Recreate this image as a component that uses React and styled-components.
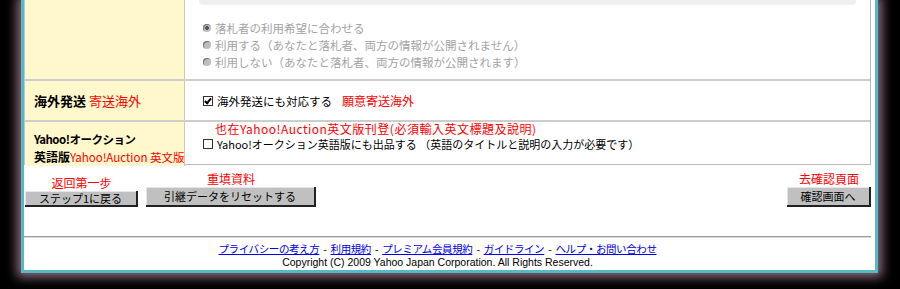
import React from 'react'
import styled, { createGlobalStyle } from 'styled-components'

const GlobalStyle = createGlobalStyle`
   html, body {
      margin: 0;
      padding: 0;
      background: #000;
   }
   body {
      font-family: "Noto Sans CJK JP", "Noto Sans", sans-serif;
      font-size: 12px;
      color: #000;
   }
`

const App = () => {
   const options = [
      { id: 1, label: '落札者の利用希望に合わせる', checked: true },
      { id: 2, label: '利用する（あなたと落札者、両方の情報が公開されません）', checked: false },
      { id: 3, label: '利用しない（あなたと落札者、両方の情報が公開されます）', checked: false },
   ]

   const links = ['プライバシーの考え方', '利用規約', 'プレミアム会員規約', 'ガイドライン', 'ヘルプ・お問い合わせ']

   return (
      <Stage>
         <GlobalStyle />
         <Frame>
            <Table>
               <Row $height={79}>
                  <Label />
                  <Value>
                     <GreyBox />
                     <Options>
                        {options.map((o) => (
                           <Option key={o.id}>
                              <Radio $checked={o.checked} />
                              {o.label}
                           </Option>
                        ))}
                     </Options>
                  </Value>
               </Row>
               <Row $height={39}>
                  <Label $center>
                     <b>海外発送</b>&nbsp;<Red>寄送海外</Red>
                  </Label>
                  <Value $center>
                     <CheckLine>
                        <Check $checked />
                        海外発送にも対応する
                        <Red $gap>願意寄送海外</Red>
                     </CheckLine>
                  </Value>
               </Row>
               <Row $height={42}>
                  <Label $top={9}>
                     <LabelLine $tight>Yahoo!オークション</LabelLine>
                     <LabelLine>
                        英語版<Red $thin>Yahoo!Auction 英文版</Red>
                     </LabelLine>
                  </Label>
                  <Value>
                     <Note>也在Yahoo!Auction英文版刊登(必須輸入英文標題及說明)</Note>
                     <CheckLine $small>
                        <Check />
                        Yahoo!オークション英語版にも出品する （英語のタイトルと説明の入力が必要です）
                     </CheckLine>
                  </Value>
               </Row>
            </Table>

            <ButtonBar>
               <ButtonGroup>
                  <Hint>返回第一步</Hint>
                  <Button $w={113} $h={16}>ステップ1に戻る</Button>
               </ButtonGroup>
               <ButtonGroup>
                  <Hint>重填資料</Hint>
                  <Button $w={170} $h={20}>引継データをリセットする</Button>
               </ButtonGroup>
               <ButtonGroup $right>
                  <Hint>去確認頁面</Hint>
                  <Button $w={84} $h={20}>確認画面へ</Button>
               </ButtonGroup>
            </ButtonBar>

            <Rule />

            <Footer>
               <Links>
                  {links.map((l, i) => (
                     <React.Fragment key={l}>
                        {i > 0 && <Sep>-</Sep>}
                        <Link href="#">{l}</Link>
                     </React.Fragment>
                  ))}
               </Links>
               <Copyright>Copyright (C) 2009 Yahoo Japan Corporation. All Rights Reserved.</Copyright>
            </Footer>
         </Frame>
      </Stage>
   )
}

export default App

const Stage = styled.div`
   width: 900px;
   height: 289px;
   box-sizing: border-box;
   padding: 0 22px 16px 21px;
   background: #000;
   overflow: hidden;
   display: flex;
`

const Frame = styled.div`
   flex: 1;
   display: flex;
   flex-direction: column;
   background: #fff;
   border: 3px solid #56b9c8;
   border-top: none;
   box-shadow: 0 0 10px 4px #8e6f82;
   padding-right: 4px;
`

const Table = styled.div`
   display: flex;
   flex-direction: column;
   border-left: 1px solid #c4c4c4;
   border-right: 1px solid #b8b8b8;
   border-bottom: 1px solid #bcbcbc;
`

const Row = styled.div`
   display: grid;
   grid-template-columns: 160px 1fr;
   height: ${(p) => p.$height}px;
   & + & {
      border-top: 2px solid #cdcdcd;
   }
`

const Label = styled.div`
   background: #fff8cc;
   border-right: 1px solid #c8c8c8;
   padding: ${(p) => p.$top || 0}px 0 0 9px;
   display: flex;
   flex-direction: column;
   ${(p) => p.$center && 'flex-direction: row; align-items: center;'}
   font-size: 13px;
   white-space: nowrap;
`

const LabelLine = styled.div`
   line-height: 17px;
   font-weight: bold;
   font-size: ${(p) => (p.$tight ? 11.5 : 12)}px;
   letter-spacing: ${(p) => (p.$tight ? -0.5 : 0)}px;
`

const Value = styled.div`
   display: flex;
   flex-direction: column;
   padding-left: 18px;
   min-width: 0;
   ${(p) => p.$center && 'justify-content: center;'}
`

const GreyBox = styled.div`
   height: 5px;
   margin: 0 14px 0 -4px;
   background: #efefef;
   border-radius: 0 0 4px 4px;
`

const Options = styled.div`
   margin-top: 14px;
   display: flex;
   flex-direction: column;
`

const Option = styled.div`
   display: flex;
   align-items: center;
   height: 17px;
   font-size: 11.5px;
   color: #a3a3a3;
   white-space: nowrap;
`

const Radio = styled.span`
   width: 8px;
   height: 8px;
   margin-right: 4px;
   border-radius: 50%;
   background: ${(p) => (p.$checked ? 'radial-gradient(circle, #555 0 1.6px, #bdbdbd 2.2px)' : '#bdbdbd')};
   box-shadow: inset 1px 1px 0 #777;
   flex-shrink: 0;
`

const CheckLine = styled.div`
   display: flex;
   align-items: center;
   height: 14px;
   font-size: ${(p) => (p.$small ? 11 : 11.5)}px;
   white-space: nowrap;
`

const Check = styled.span`
   width: 8px;
   height: 8px;
   margin-right: 4px;
   border: 1px solid #333;
   background: #fff;
   flex-shrink: 0;
   position: relative;
   &::after {
      content: '';
      display: ${(p) => (p.$checked ? 'block' : 'none')};
      position: absolute;
      left: 2px;
      top: 0;
      width: 2px;
      height: 5px;
      border: solid #000;
      border-width: 0 2px 2px 0;
      transform: rotate(40deg);
   }
`

const Red = styled.span`
   color: #ff0000;
   font-weight: normal;
   ${(p) => p.$gap && 'margin-left: 10px; font-size: 12px;'}
   ${(p) => p.$thin && 'font-size: 11.5px;'}
`

const Note = styled.div`
   color: #ff0000;
   font-size: 12px;
   line-height: 14px;
   letter-spacing: 0.5px;
   margin: 0 0 1px 12px;
   white-space: nowrap;
`

const ButtonBar = styled.div`
   display: flex;
   align-items: flex-end;
   gap: 8px;
   padding: 8px 0 0 1px;
`

const ButtonGroup = styled.div`
   display: flex;
   flex-direction: column;
   align-items: center;
   ${(p) => p.$right && 'margin-left: auto;'}
`

const Hint = styled.div`
   color: #ff0000;
   font-size: 12px;
   line-height: 12px;
   margin-bottom: 2px;
   white-space: nowrap;
`

const Button = styled.button`
   width: ${(p) => p.$w}px;
   height: ${(p) => p.$h}px;
   padding: 0;
   background: #c0c0c0;
   border: none;
   border-right: 2px solid #222;
   border-bottom: 2px solid #222;
   box-shadow: inset 1px 1px 0 #e6e6e6;
   font-family: inherit;
   font-size: 11px;
   line-height: 14px;
   color: #000;
`

const Rule = styled.div`
   margin-top: 29px;
   height: 1px;
   background: #9a9a9a;
   border-bottom: 1px solid #dcdcdc;
`

const Footer = styled.div`
   display: flex;
   flex-direction: column;
   align-items: center;
   padding: 4px 20px 0 0;
`

const Links = styled.div`
   font-size: 10.5px;
   line-height: 13px;
   letter-spacing: -0.4px;
   white-space: nowrap;
`

const Link = styled.a`
   color: #0000ee;
   text-decoration: underline;
`

const Sep = styled.span`
   color: #000;
   margin: 0 4px;
`

const Copyright = styled.div`
   margin-top: 2px;
   font-family: "Liberation Sans", Arial, sans-serif;
   font-size: 10.5px;
   line-height: 11px;
   white-space: nowrap;
`
